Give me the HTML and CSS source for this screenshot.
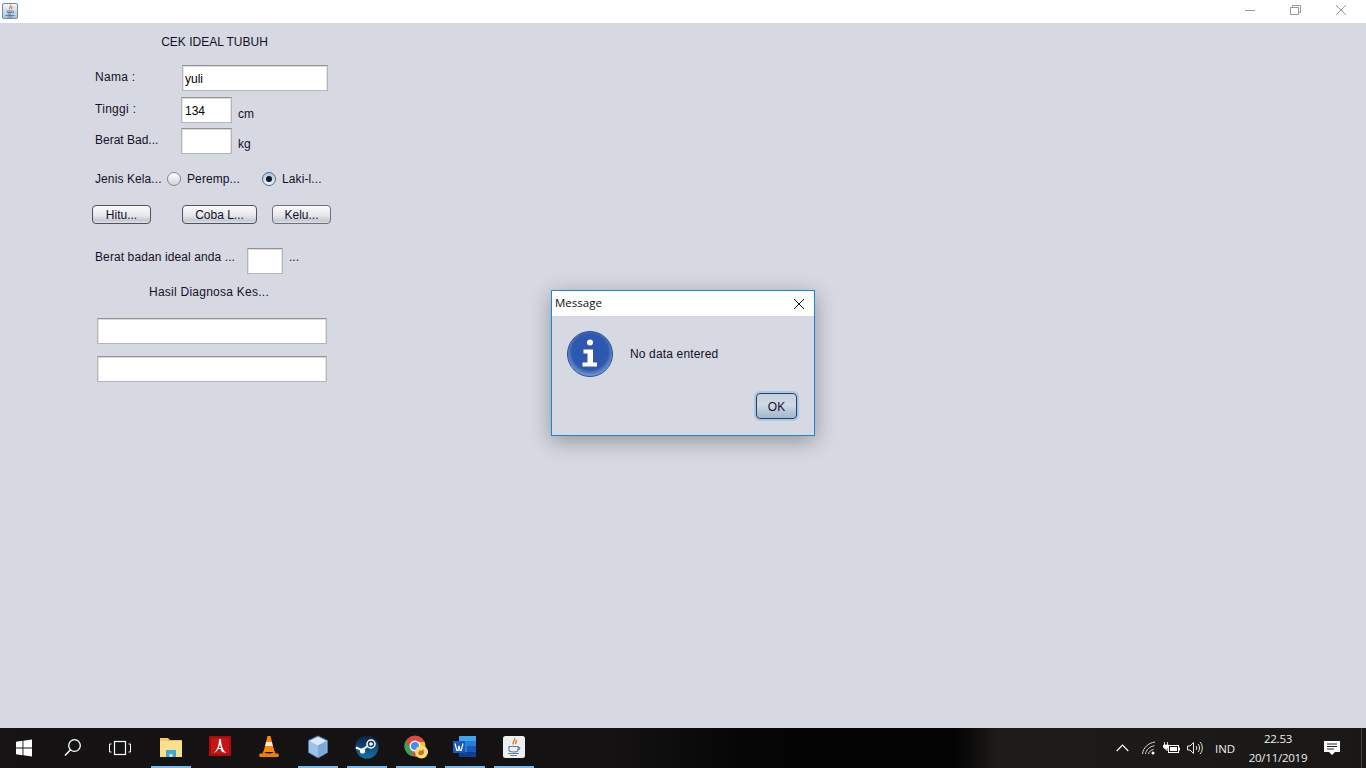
FILE: index.html
```html
<!DOCTYPE html>
<html lang="id">
<head>
<meta charset="utf-8">
<title>CEK IDEAL TUBUH</title>
<link rel="stylesheet" href="styles.css">
</head>
<body>
<header class="titlebar">
  <svg class="app-icon" viewBox="0 0 16 16"><defs><linearGradient id="ja" x1="0" y1="0" x2="0" y2="1"><stop offset="0" stop-color="#f4f7fa"/><stop offset="1" stop-color="#a9c3da"/></linearGradient></defs><rect x=".5" y=".5" width="15" height="15" rx="1.500" fill="url(#ja)" stroke="#6d8ba6"/><path d="M8.500 2c1 1.500-1.500 2.200-.8 4.200M10.300 3.500c-.8.800-1 1.400-.7 2.700" stroke="#e5761c" fill="none" stroke-width="1.100"/><path d="M4.500 8h6M5 9.500h5M6 11h3" stroke="#5d7d99"/><path d="M10.500 8c2 0 1.500 2-.5 2M3.500 12.500h9M5.500 14h5" stroke="#5d7d99" fill="none"/></svg>
  <div class="win-controls">
    <svg class="win-btn" viewBox="0 0 46 23"><path d="M18 10.500h10" stroke="#999"/></svg>
    <svg class="win-btn" viewBox="0 0 46 23"><path d="M19.500 7.500v-2h8v7h-2M17.500 7.500h8v7h-8z" stroke="#999" fill="none"/></svg>
    <svg class="win-btn" viewBox="0 0 46 23"><path d="M18 5l10 10M28 5L18 15" stroke="#999" fill="none"/></svg>
  </div>
</header>

<main class="desktop">
  <form class="form">
    <div class="form-title">CEK IDEAL TUBUH</div>

    <div class="row row-nama">
      <label class="lbl lbl-nama">Nama :</label>
      <input class="field field-nama" value="yuli" readonly>
    </div>
    <div class="row row-tinggi">
      <label class="lbl lbl-short lbl-tinggi">Tinggi :</label>
      <input class="field field-small" value="134" readonly>
      <span class="unit">cm</span>
    </div>
    <div class="row row-berat">
      <label class="lbl lbl-short">Berat Bad...</label>
      <input class="field field-small" readonly>
      <span class="unit unit-kg">kg</span>
    </div>

    <div class="row row-jenis">
      <label class="jenis-lbl">Jenis Kela...</label>
      <span class="radio"></span>
      <span class="radio-text radio-text-p">Peremp...</span>
      <span class="radio radio-on"></span>
      <span class="radio-text">Laki-l...</span>
    </div>

    <div class="row row-buttons">
      <button type="button" class="btn btn-hitung">Hitu...</button>
      <button type="button" class="btn btn-coba">Coba L...</button>
      <button type="button" class="btn btn-keluar">Kelu...</button>
    </div>

    <div class="row row-ideal">
      <label class="lbl lbl-ideal">Berat badan ideal anda ...</label>
      <input class="field field-ideal" readonly>
      <span class="dots">...</span>
    </div>

    <div class="hasil">Hasil Diagnosa Kes...</div>
    <input class="field field-wide wide-1" readonly>
    <input class="field field-wide wide-2" readonly>
  </form>

  <section class="dialog">
    <div class="dialog-title">
      <span>Message</span>
      <svg class="dialog-close" viewBox="0 0 12 12"><path d="M1 1l10 10M11 1L1 11" stroke="#111" fill="none"/></svg>
    </div>
    <div class="dialog-body">
      <svg class="info-icon" viewBox="0 0 46 46">
        <defs><radialGradient id="ib" cx=".5" cy=".45" r=".56"><stop offset="0" stop-color="#2d56ae"/><stop offset=".72" stop-color="#2e59b0"/><stop offset="1" stop-color="#86a6dc"/></radialGradient></defs>
        <circle cx="23" cy="23" r="22.500" fill="url(#ib)" stroke="#2b4f93"/>
        <circle cx="23" cy="11.500" r="3" fill="#fff"/>
        <path d="M16.500 18.500h9.500v13h4v4H15.500v-4h5v-9h-4z" fill="#fff"/>
      </svg>
      <span class="dialog-msg">No data entered</span>
    </div>
    <div class="dialog-actions"><button type="button" class="ok">OK</button></div>
  </section>
</main>

<footer class="taskbar">
  <div class="tb-sys">
    <svg viewBox="0 0 48 40"><path d="M16 13.700l6.500-.9v6.700H16zM23.400 12.700l8.600-1.200v8H23.400zM16 20.500h6.500v6.700l-6.500-.9zM23.400 20.500H32v8l-8.600-1.200z" fill="#fff"/></svg>
    <svg viewBox="0 0 48 40"><circle cx="26.500" cy="17.500" r="5.800" fill="none" stroke="#fff" stroke-width="1.300"/><path d="M22.500 21.800L17 27.500" stroke="#fff" stroke-width="1.500"/></svg>
    <svg viewBox="0 0 48 40"><rect x="18.500" y="13.500" width="11" height="13" fill="none" stroke="#fff" stroke-width="1.200"/><path d="M15.500 16h-2v8h2M32.500 16h2v8h-2" fill="none" stroke="#fff"/></svg>
  </div>
  <div class="tb-apps">
    <div class="tb-app active"><svg viewBox="0 0 24 24"><path d="M1 3h8l2 2h12v1H1z" fill="#e3c25f"/><path d="M1 6h22v16H1z" fill="#fbe08c"/><path d="M7 22v-7h10v7h-3.500v-3h-3v3z" fill="#3fa6e3"/><path d="M1 3h8v3H1z" fill="#f3cb68"/></svg></div>
    <div class="tb-app"><svg viewBox="0 0 24 24"><rect x="1" y="1" width="22" height="20" fill="#a80c0c"/><rect x="3" y="3" width="18" height="16" fill="#c51515"/><path d="M6 18c3-3 5-8 5-14h2c0 6 2 11 5 14-2-.5-3.500-1-4-1l-1.500-3h-2.500l-1 2c-1 .5-2 1.500-3 2z" fill="#fff"/><path d="M12 8c0 2-.5 3.500-1.200 5h2.400c-.7-1.500-1.200-3-1.200-5z" fill="#c51515"/></svg></div>
    <div class="tb-app"><svg viewBox="0 0 24 24"><path d="M10.500 1h3l1.500 6h-6z" fill="#ff8a00"/><path d="M9 7h6l1 4H8z" fill="#eee"/><path d="M8 11h8l1.500 6h-11z" fill="#ff8a00"/><path d="M6.500 15.500l-1 3H3c-1 0-1 3 0 3.500h18c1-.5 1-3.500 0-3.500h-2.500l-1-3c0 2-2.500 3-5.500 3s-5.500-1-5.500-3z" fill="#f08000"/></svg></div>
    <div class="tb-app active"><svg viewBox="0 0 24 24"><path d="M12 1l9.500 4.500v12L12 23l-9.500-5.500v-12z" fill="#9cc3e6" stroke="#4a77b4" stroke-width="1" stroke-linejoin="round"/><path d="M12 2L20.500 6 12 10.500 3.500 6z" fill="#dbe9f5"/><path d="M12 10.500V22l8.500-5V6z" fill="#7ea9d4"/></svg></div>
    <div class="tb-app active"><svg viewBox="0 0 24 24"><defs><linearGradient id="st" x1="0" y1="0" x2="0" y2="1"><stop offset="0" stop-color="#0e1f3f"/><stop offset="1" stop-color="#1273ad"/></linearGradient></defs><circle cx="12" cy="12" r="11.500" fill="url(#st)"/><circle cx="16" cy="9" r="4" fill="none" stroke="#fff" stroke-width="1.500"/><circle cx="16" cy="9" r="1.800" fill="#fff"/><path d="M.8 12.500l6 2.500 6-4" stroke="#fff" stroke-width="2" fill="none"/><circle cx="7.500" cy="16" r="2.600" fill="#fff"/></svg></div>
    <div class="tb-app active"><svg viewBox="0 0 24 24"><circle cx="11" cy="11" r="10.500" fill="#dd4b3e"/><path d="M11 21.500A10.500 10.500 0 0 1 1.800 5.800L7 13.500l3 8z" fill="#3ca251"/><path d="M20.500 7a10.500 10.500 0 0 1-9.500 14.500L15 14V7z" fill="#f6c02c"/><circle cx="11" cy="11" r="4.800" fill="#4a8bf0" stroke="#fff" stroke-width="1.400"/><circle cx="17.500" cy="17" r="6.500" fill="#f7dc7a"/><path d="M14 18l2-3 1.500 1 2-2 .5 4-2 2h-3z" fill="#d8672a"/></svg></div>
    <div class="tb-app active"><svg viewBox="0 0 24 24"><path d="M6 1h17v21H6z" fill="#2b7cd3"/><path d="M6 1h17v5H6z" fill="#41a5ee"/><path d="M14 11h9v6h-9z" fill="#185abd"/><path d="M6 17h17v5H6z" fill="#103f91"/><rect x="0" y="6" width="12" height="12" fill="#185abd"/><path d="M2 8.500l1.800 7h1.200L6 11l1 4.500h1.200l1.800-7" stroke="#fff" fill="none" stroke-width="1.200"/></svg></div>
    <div class="tb-app active"><svg viewBox="0 0 24 24"><rect x="1" y="1" width="22" height="22" rx="2.500" fill="#eef0f0"/><path d="M12.500 3c1.500 2.500-2.500 3.500-1.300 6.500M15 5c-1.300 1.200-1.500 2-1 4" stroke="#e5761c" fill="none" stroke-width="1.300"/><path d="M7 11.500h9v3.500c0 1.500-1.500 2-4.500 2S7 16.500 7 15zM16 12c2.500 0 2.500 3-.5 3" fill="none" stroke="#66829b" stroke-width="1.200"/><path d="M6 18.500h11M8 20.500h7" stroke="#66829b" stroke-width="1.100"/></svg></div>
  </div>
  <div class="tb-tray">
    <svg class="tray-chev" viewBox="0 0 13 8"><path d="M.7 7l5.800-6 5.800 6" fill="none" stroke="#fff" stroke-width="1.100"/></svg>
    <svg class="tray-net" viewBox="0 0 14 14"><g fill="none" stroke="#d8d8d8" stroke-width="1"><path d="M.5 13c.5-6 5.500-11 12.500-12"/><path d="M3.500 13c.5-4 4-7.500 9-8.300"/><path d="M6.500 13c.3-2 2-4 5-4.500"/></g><circle cx="11" cy="12" r="1.500" fill="#fff"/></svg>
    <svg class="tray-bat" viewBox="0 0 17 12"><path d="M1.500 0v3M4.500 0v3M.5 3h5v2c0 1-1 1.500-2.500 1.500S.5 6 .5 5z" fill="#fff" stroke="#fff" stroke-width=".8"/><path d="M3 6.500v1.500h3" stroke="#fff" fill="none"/><rect x="5.500" y="3.500" width="10" height="7" fill="#1c1a18" stroke="#fff"/><rect x="7" y="5" width="7" height="4" fill="#fff"/><path d="M16.500 5.500v3" stroke="#fff"/></svg>
    <svg class="tray-vol" viewBox="0 0 16 14"><path d="M.5 5v4h2.500L6.500 12.500v-11L3 5z" fill="none" stroke="#e8e8e8"/><path d="M9 5c1 1 1 3 0 4M11 3c2 2 2 6 0 8M13 1c3 3 3 9 0 12" fill="none" stroke="#e8e8e8"/></svg>
    <span class="tray-lang">IND</span>
    <div class="tray-clock"><span>22.53</span><span>20/11/2019</span></div>
    <svg class="tray-note" viewBox="0 0 16 16"><path d="M0 1h16v11h-5l-3 3-3-3H0z" fill="#fff"/><path d="M3 4h10M3 6.500h10M3 9h7" stroke="#222"/></svg>
    <span class="tray-edge"></span>
  </div>
</footer>
</body>
</html>
```
FILE: styles.css
```css
* { box-sizing: border-box; }
html, body { margin: 0; height: 100%; overflow: hidden; }
body {
  width: 1366px; height: 768px;
  display: flex; flex-direction: column;
  font-family: "Liberation Sans", Arial, sans-serif;
  font-size: 12px; color: #14102a;
  background: #d6d9e1;
}

.titlebar { height: 23px; background: #fff; display: flex; align-items: flex-start; justify-content: space-between; flex: none; }
.app-icon { width: 16px; height: 16px; margin: 3px 0 0 2px; display: block; }
.win-controls { display: flex; gap: 0; margin-right: 2px; }
.win-btn { width: 46px; height: 23px; display: block; margin-left: -.5px; }

.desktop { flex: 1; position: relative; }

.form { display: flex; flex-direction: column; align-items: flex-start; padding-left: 92px; width: 345px; }
.form-title { margin-top: 11px; height: 16px; width: 245px; line-height: 16px; text-align: center; }
.row { display: flex; align-items: flex-start; }
.row-nama { margin-top: 15px; height: 26px; }
.row-tinggi { margin-top: 6px; height: 26px; }
.row-berat { margin-top: 5px; height: 26px; }
.row-jenis { margin-top: 16px; height: 18px; align-items: center; padding-left: 3px; }
.row-buttons { margin-top: 17px; height: 19px; }
.row-ideal { margin-top: 24px; height: 26px; padding-left: 3px; }

.lbl { line-height: 24px; white-space: nowrap; }
.lbl-nama { width: 90px; padding-left: 3px; letter-spacing: .3px; }
.lbl-short { width: 89px; padding-left: 3px; }
.lbl-tinggi { letter-spacing: .3px; }
.lbl-ideal { width: 152px; line-height: 18px; letter-spacing: .1px; }
.unit { margin: 9px 0 0 6px; line-height: 16px; }
.unit-kg { margin-top: 8px; }
.dots { margin: 0 0 0 6px; line-height: 18px; }

.field {
  display: block; height: 26px; padding: 2px 3px 0; margin: 0;
  font: 12px "Liberation Sans", Arial, sans-serif; color: #000;
  background: #fff; outline: none;
  border: 1px solid #b3b5ba; border-top-color: #8f9092;
  box-shadow: inset 0 1px 0 #dcdcdc, inset 1px 0 0 #e6e6e6, inset -1px 0 0 #e6e6e6;
  border-radius: 0;
}
.field-nama { width: 146px; padding-left: 2px; }
.field-small { width: 51px; }
.field-ideal { width: 36px; }
.field-wide { width: 230px; margin-left: 5px; }
.wide-1 { margin-top: 18px; }
.wide-2 { margin-top: 12px; }

.jenis-lbl { width: 72px; white-space: nowrap; letter-spacing: .1px; }
.radio {
  width: 14px; height: 14px; border-radius: 50%; flex: none; display: flex; align-items: center; justify-content: center;
  border: 1px solid #80858e;
  background: linear-gradient(#fff, #d5d9e0 90%);
}
.radio-on { background: linear-gradient(#b4c2d3, #eef2f6); border-color: #4a6b8f; }
.radio-on::after { content: ""; width: 6px; height: 6px; border-radius: 50%; background: #10152a; }
.radio-text { margin-left: 6px; white-space: nowrap; letter-spacing: .1px; }
.radio-text-p { width: 75px; }

.btn {
  height: 19px; padding: 0; margin: 0;
  font: 12px "Liberation Sans", Arial, sans-serif; color: #14102a;
  border: 1px solid #4d535c; border-radius: 4px;
  background: linear-gradient(#fbfbfc, #e6e8ec 55%, #c6cad2 85%, #dfe2e6);
}
.btn-hitung { width: 59px; }
.btn-coba { width: 75px; margin-left: 31px; }
.btn-keluar { width: 59px; margin-left: 15px; border-color: #6b7079; }

.hasil { margin: 10px 0 0 57px; height: 16px; line-height: 16px; letter-spacing: .25px; }

.dialog {
  position: absolute; left: 551px; top: 267px; width: 264px; height: 146px;
  display: flex; flex-direction: column;
  background: #d6d9e1; border: 1px solid #1a84d6;
  box-shadow: 0 5px 20px rgba(0,0,0,.32);
}
.dialog-title {
  height: 25px; background: #fff; flex: none; display: flex; align-items: center; justify-content: space-between;
  padding: 0 9px 2px 3px;
  font: 11.5px "Open Sans", "Noto Sans", sans-serif; color: #111;
}
.dialog-close { width: 12px; height: 12px; display: block; margin-top: 2px; }
.dialog-body { display: flex; align-items: center; padding: 15px 0 0 15px; }
.info-icon { width: 46px; height: 46px; display: block; flex: none; }
.dialog-msg { margin-left: 17px; letter-spacing: .15px; }
.dialog-actions { display: flex; justify-content: flex-end; padding: 16px 17px 0 0; }
.ok {
  width: 41px; height: 26px; padding: 1px 0 0;
  font: 12px "Liberation Sans", Arial, sans-serif; color: #14102a;
  border: 1px solid #2a3f5c; border-radius: 4px;
  background: linear-gradient(#c3d0de, #cfdae6 45%, #a9bccf 90%);
  box-shadow: 0 0 0 2px #a9c7e6;
}

.taskbar {
  height: 40px; flex: none; display: flex; align-items: stretch; color: #fff;
  background: linear-gradient(90deg, #151313 0, #141212 45%, #050505 55%, #040404 70%, #1e1b19 73%, #1c1a18 85%, #1a1817 100%);
}
.tb-sys { display: flex; }
.tb-sys svg { width: 48px; height: 40px; display: block; }
.tb-apps { display: flex; gap: 9px; margin-left: 7px; }
.tb-app { width: 40px; height: 40px; display: flex; align-items: center; justify-content: center; padding-bottom: 1px; border-bottom: 2px solid transparent; }
.tb-app svg { width: 24px; height: 24px; display: block; }
.tb-app.active { border-bottom-color: #76b9ed; }

.tb-tray { margin-left: auto; display: flex; align-items: center; font: 11.5px "Open Sans", "Noto Sans", sans-serif; color: #eee; }
.tray-chev { width: 13px; height: 8px; display: block; margin-right: 13px; }
.tray-net { width: 14px; height: 14px; display: block; margin-right: 7px; }
.tray-bat { width: 17px; height: 12px; display: block; margin-right: 7px; }
.tray-vol { width: 16px; height: 14px; display: block; margin-right: 12px; }
.tray-lang { width: 20px; margin-right: 12px; white-space: nowrap; }
.tray-clock { display: flex; flex-direction: column; align-items: center; line-height: 19px; width: 62px; letter-spacing: -.25px; }
.tray-note { width: 16px; height: 16px; display: block; margin: 0 21px 0 15px; }
.tray-edge { width: 1px; height: 40px; background: #444; margin-right: 4px; }
```
